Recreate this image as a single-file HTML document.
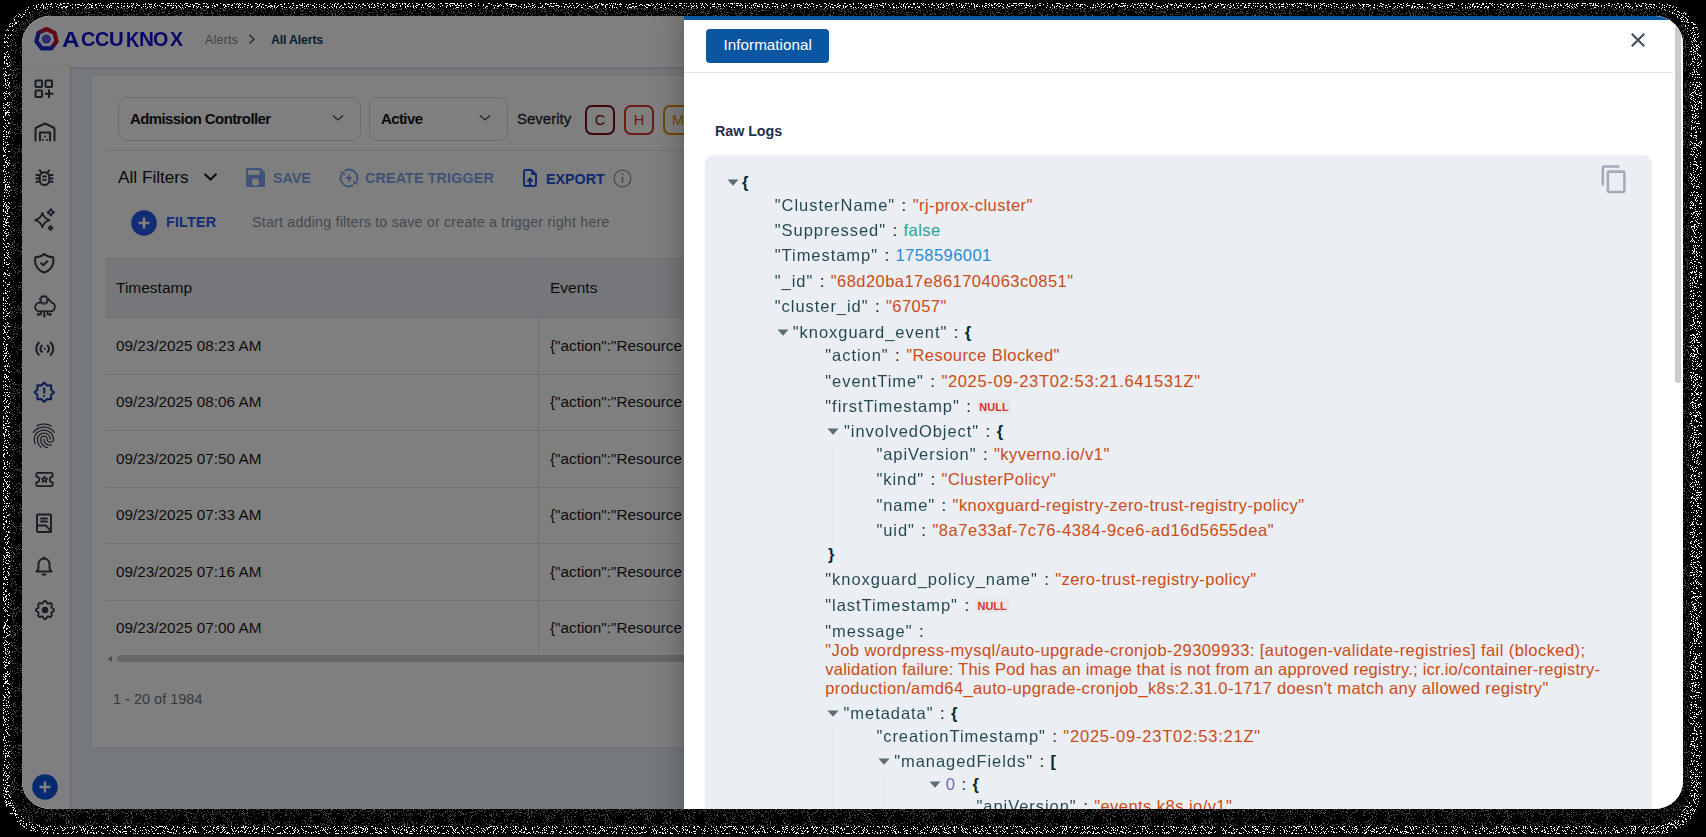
<!DOCTYPE html>
<html><head><meta charset="utf-8">
<style>
*{box-sizing:border-box;margin:0;padding:0}
html,body{width:1706px;height:837px;overflow:hidden;background:#000;font-family:"Liberation Sans",sans-serif}
#frame{position:absolute;left:22px;top:16px;width:1661px;height:793px;border-radius:28px;overflow:hidden;background:#fff}
#pg{position:absolute;left:-22px;top:-16px;width:1706px;height:837px}
.a{position:absolute;white-space:nowrap;line-height:1}
.k{color:#002b36;opacity:.85;letter-spacing:0.95px}.c{display:inline-block;width:17.5px;text-align:center;color:#0b2030}.v{color:#cb4b16;letter-spacing:0.45px}.b{color:#002b36;font-weight:700}.msg{color:#cb4b16;letter-spacing:0.43px}.nl{display:inline-block;vertical-align:1px;font-size:11px;font-weight:700;color:#dc322f;background:#e7e7e9;border-radius:3px;padding:1px 2px;line-height:12px}
#overlay{position:absolute;left:0;top:0;width:1706px;height:837px;background:rgba(0,0,0,0.5)}
</style></head><body>
<svg class="a" style="left:0;top:0" width="1706" height="837">
<defs>
<filter id="nz" x="0" y="0" width="1706" height="837" filterUnits="userSpaceOnUse" color-interpolation-filters="sRGB">
<feTurbulence type="fractalNoise" baseFrequency="0.9" numOctaves="2" seed="7" result="t"/>
<feColorMatrix in="t" type="matrix" values="0 0 0 0 1  0 0 0 0 1  0 0 0 0 1  3 0 0 0 -1.3"/>
<feComponentTransfer><feFuncA type="discrete" tableValues="0 1"/></feComponentTransfer>
</filter>
<filter id="nz2" x="0" y="0" width="1706" height="837" filterUnits="userSpaceOnUse" color-interpolation-filters="sRGB">
<feTurbulence type="fractalNoise" baseFrequency="0.95" numOctaves="2" seed="11" result="t"/>
<feColorMatrix in="t" type="matrix" values="0 0 0 0 0.3  0 0 0 0 0.3  0 0 0 0 0.3  3 0 0 0 -1.4"/>
<feComponentTransfer><feFuncA type="discrete" tableValues="0 1"/></feComponentTransfer>
</filter>
<mask id="m1"><rect x="3" y="3" width="1699" height="831" rx="44" fill="#fff"/><rect x="10" y="8.5" width="1680" height="817.5" rx="37" fill="#000"/></mask>
<mask id="m2"><rect x="10" y="8.5" width="1680" height="817.5" rx="37" fill="#fff"/></mask>
</defs>
<rect x="0" y="0" width="1706" height="837" fill="#fff" filter="url(#nz)" mask="url(#m1)"/>
<rect x="0" y="0" width="1706" height="837" fill="#fff" filter="url(#nz2)" mask="url(#m2)"/>
</svg>
<div id="frame"><div id="pg">

  <!-- main bg -->
  <div class="a" style="left:70px;top:66px;width:1640px;height:771px;background:#ebf0fa"></div>
  <!-- card -->
  <div class="a" style="left:92px;top:76px;width:1600px;height:671px;background:#fff;box-shadow:0 1px 4px rgba(0,0,0,0.08)"></div>
  <!-- header -->
  <div class="a" style="left:0;top:0;width:1706px;height:67px;background:#fff;box-shadow:0 1px 3px rgba(0,0,0,0.12)"></div>
  <!-- logo -->
  <svg class="a" style="left:33px;top:26px" width="27" height="26" viewBox="0 0 27 26">
    <defs><linearGradient id="lg" x1="1" y1="0" x2="0" y2="1"><stop offset="0.35" stop-color="#c0102a"/><stop offset="0.65" stop-color="#1a2ad0"/></linearGradient></defs>
    <polygon points="13.5,3 21.5,6.8 23.6,15.4 18.2,22.4 8.8,22.4 3.4,15.4 5.5,6.8" fill="none" stroke="url(#lg)" stroke-width="4.2" stroke-linejoin="round"/>
    <circle cx="13.4" cy="13" r="4.6" fill="#5050d8"/>
    <path d="M13.4 10.4 l2.2 1.2 v2.6 l-2.2 1.2 l-2.2 -1.2 v-2.6z M13.4 12.8 v2.6 M11.2 11.6 l2.2 1.2 l2.2 -1.2" fill="none" stroke="#8080f0" stroke-width="0.6"/>
  </svg>
  <div class="a" style="left:62.2px;top:28.8px;font-size:22px;font-weight:700;color:#0c0cd0;transform:scaleX(1.107);transform-origin:0 0">A</div><div class="a" style="left:81.2px;top:30.3px;font-size:19.3px;font-weight:700;color:#0c0cd0;transform:scaleX(1.025);transform-origin:0 0">C</div><div class="a" style="left:95.3px;top:30.3px;font-size:19.3px;font-weight:700;color:#0c0cd0;transform:scaleX(1.025);transform-origin:0 0">C</div><div class="a" style="left:108.9px;top:30.3px;font-size:19.3px;font-weight:700;color:#0c0cd0;transform:scaleX(1.058);transform-origin:0 0">U</div><div class="a" style="left:125.8px;top:28.8px;font-size:22px;font-weight:700;color:#0c0cd0;transform:scaleX(0.847);transform-origin:0 0">K</div><div class="a" style="left:138.9px;top:30.3px;font-size:19.3px;font-weight:700;color:#0c0cd0;transform:scaleX(1.075);transform-origin:0 0">N</div><div class="a" style="left:153.4px;top:30.3px;font-size:19.3px;font-weight:700;color:#0c0cd0;transform:scaleX(1.021);transform-origin:0 0">O</div><div class="a" style="left:169.6px;top:30.3px;font-size:19.3px;font-weight:700;color:#0c0cd0;transform:scaleX(1.017);transform-origin:0 0">X</div>
  <div class="a" style="left:205px;top:34px;font-size:12.3px;color:#7d8797;letter-spacing:0.3px">Alerts</div>
  <svg class="a" style="left:248px;top:34px" width="8" height="11"><path d="M1.5 1 L6 5.3 L1.5 9.6" fill="none" stroke="#555" stroke-width="1.4"/></svg>
  <div class="a" style="left:271px;top:34px;font-size:12.3px;font-weight:700;color:#0b3d6e;letter-spacing:-0.15px">All Alerts</div>
  <!-- sidebar -->
  <div class="a" style="left:0;top:67px;width:70px;height:770px;background:#fff;box-shadow:1px 0 3px rgba(0,0,0,0.1)"></div>
  <!-- filters row1 -->
  <div class="a" style="left:118px;top:97px;width:243px;height:44px;border:1px solid #d4d9e1;border-radius:9px"></div>
  <div class="a" style="left:130px;top:111px;font-size:15px;font-weight:700;color:#141414;letter-spacing:-0.6px">Admission Controller</div>
  <svg class="a" style="left:332px;top:114px" width="12" height="8"><path d="M1 1.5 L6 6 L11 1.5" fill="none" stroke="#444" stroke-width="1.3"/></svg>
  <div class="a" style="left:369px;top:97px;width:139px;height:44px;border:1px solid #d4d9e1;border-radius:9px"></div>
  <div class="a" style="left:381px;top:111px;font-size:15px;font-weight:700;color:#141414;letter-spacing:-0.6px">Active</div>
  <svg class="a" style="left:479px;top:114px" width="12" height="8"><path d="M1 1.5 L6 6 L11 1.5" fill="none" stroke="#444" stroke-width="1.3"/></svg>
  <div class="a" style="left:517px;top:111px;font-size:15px;color:#1e2a3a;letter-spacing:0px;-webkit-text-stroke:0.3px #1e2a3a">Severity</div>
  <div class="a" style="left:585px;top:105px;width:30px;height:30px;border:2px solid #7a0c0c;border-radius:7px;color:#7a0c0c;font-size:14.5px;text-align:center;line-height:27.5px">C</div>
  <div class="a" style="left:624px;top:105px;width:30px;height:30px;border:2px solid #d9342b;border-radius:7px;color:#d9342b;font-size:14.5px;text-align:center;line-height:27.5px">H</div>
  <div class="a" style="left:663px;top:105px;width:30px;height:30px;border:2px solid #e58a10;border-radius:7px;color:#e58a10;font-size:14.5px;text-align:center;line-height:27.5px">M</div>
  <div class="a" style="left:105px;top:150px;width:600px;height:1px;background:#e2e5ea"></div>
  <!-- filters row2 -->
  <div class="a" style="left:118px;top:169px;font-size:17.2px;color:#141414">All Filters</div>
  <svg class="a" style="left:203px;top:172px" width="15" height="10"><path d="M1.5 1.8 L7.5 7.5 L13.5 1.8" fill="none" stroke="#141414" stroke-width="2"/></svg>
  <svg class="a" style="left:246.3px;top:167.8px" width="19" height="19.6" viewBox="0 0 19 19.6"><path d="M1.8 0 h13 l4.2 4.2 v13.6 a1.8 1.8 0 0 1 -1.8 1.8 h-15.4 a1.8 1.8 0 0 1 -1.8 -1.8 v-16 a1.8 1.8 0 0 1 1.8 -1.8z" fill="#7fa6ec"/><rect x="2" y="2.2" width="11.5" height="4.6" fill="#fff"/><circle cx="9.5" cy="14.2" r="3.6" fill="#fff"/></svg>
  <div class="a" style="left:273px;top:171px;font-size:14.3px;font-weight:700;color:#7fa6ec">SAVE</div>
  <svg class="a" style="left:337.3px;top:166px" width="24" height="24" viewBox="0 0 24 24"><path d="M7.85 4.81 A8.3 8.3 0 0 1 19.52 15.51 M16.15 19.19 A8.3 8.3 0 0 1 4.48 8.49" fill="none" stroke="#7fa6ec" stroke-width="2"/><path d="M2.2 5.8 h5.5 v4.2z M21.8 18.2 h-5.5 v-4.2z" fill="#7fa6ec"/><path d="M13 6.8 L8.6 13 H11.6 L10.9 17.4 L15.4 11 H12.4z" fill="#7fa6ec"/></svg>
  <div class="a" style="left:365px;top:171px;font-size:14.3px;font-weight:700;color:#7fa6ec;letter-spacing:0.15px">CREATE TRIGGER</div>
  <svg class="a" style="left:523px;top:169px" width="14" height="18" viewBox="0 0 14 18"><path d="M2.5 1 H8.5 L13 5.5 V15.5 a1.5 1.5 0 0 1 -1.5 1.5 H2.5 a1.5 1.5 0 0 1 -1.5 -1.5 V2.5 a1.5 1.5 0 0 1 1.5 -1.5z" fill="none" stroke="#1d52e0" stroke-width="1.9" stroke-linejoin="round"/><path d="M8.3 1 V6 H13z" fill="#1d52e0"/><path d="M7 16.5 V9.8 M4.3 12.4 L7 9.6 L9.7 12.4" fill="none" stroke="#1d52e0" stroke-width="2"/></svg>
  <div class="a" style="left:546px;top:172px;font-size:14.3px;font-weight:700;color:#1d52e0">EXPORT</div>
  <svg class="a" style="left:613px;top:169px" width="19" height="19" viewBox="0 0 19 19"><circle cx="9.5" cy="9.5" r="8.4" fill="none" stroke="#8a8f96" stroke-width="1.2"/><path d="M9.5 8 v6" stroke="#8a8f96" stroke-width="1.5"/><circle cx="9.5" cy="5.3" r="0.95" fill="#8a8f96"/></svg>
  <!-- filters row3 -->
  <svg class="a" style="left:131px;top:210px" width="26" height="26" viewBox="0 0 26 26"><circle cx="13" cy="13" r="12.8" fill="#2458ee"/><path d="M13 7.5 v11 M7.5 13 h11" stroke="#fff" stroke-width="2.6"/></svg>
  <div class="a" style="left:166px;top:215px;font-size:14.3px;font-weight:700;color:#2458ee;letter-spacing:0.2px">FILTER</div>
  <div class="a" style="left:252px;top:215px;font-size:14.3px;color:#8b95a3;letter-spacing:0.19px">Start adding filters to save or create a trigger right here</div>
  <!-- table -->
  <div class="a" style="left:105px;top:258px;width:600px;height:60px;background:#eaeef5;border-top:1px solid #dfe4ec;border-bottom:1px solid #dfe4ec"></div>
  <div class="a" style="left:538px;top:258px;width:1px;height:395px;background:#dbe3ef"></div>
  <div class="a" style="left:116px;top:279.5px;font-size:15.5px;color:#1a1a1a">Timestamp</div>
  <div class="a" style="left:550px;top:279.5px;font-size:15.5px;color:#1a1a1a">Events</div>
  <div class="a" style="left:105px;top:374.0px;width:600px;height:1px;background:#dbe3ef"></div>
  <div class="a" style="left:116px;top:337.9px;font-size:15.3px;color:#1a1a1a">09/23/2025 08:23 AM</div>
  <div class="a" style="left:550px;top:337.9px;font-size:15.3px;color:#1a1a1a">{"action":"Resource</div>
  <div class="a" style="left:105px;top:430.4px;width:600px;height:1px;background:#dbe3ef"></div>
  <div class="a" style="left:116px;top:394.3px;font-size:15.3px;color:#1a1a1a">09/23/2025 08:06 AM</div>
  <div class="a" style="left:550px;top:394.3px;font-size:15.3px;color:#1a1a1a">{"action":"Resource</div>
  <div class="a" style="left:105px;top:486.8px;width:600px;height:1px;background:#dbe3ef"></div>
  <div class="a" style="left:116px;top:450.7px;font-size:15.3px;color:#1a1a1a">09/23/2025 07:50 AM</div>
  <div class="a" style="left:550px;top:450.7px;font-size:15.3px;color:#1a1a1a">{"action":"Resource</div>
  <div class="a" style="left:105px;top:543.2px;width:600px;height:1px;background:#dbe3ef"></div>
  <div class="a" style="left:116px;top:507.1px;font-size:15.3px;color:#1a1a1a">09/23/2025 07:33 AM</div>
  <div class="a" style="left:550px;top:507.1px;font-size:15.3px;color:#1a1a1a">{"action":"Resource</div>
  <div class="a" style="left:105px;top:599.6px;width:600px;height:1px;background:#dbe3ef"></div>
  <div class="a" style="left:116px;top:563.5px;font-size:15.3px;color:#1a1a1a">09/23/2025 07:16 AM</div>
  <div class="a" style="left:550px;top:563.5px;font-size:15.3px;color:#1a1a1a">{"action":"Resource</div>
  <div class="a" style="left:116px;top:619.9px;font-size:15.3px;color:#1a1a1a">09/23/2025 07:00 AM</div>
  <div class="a" style="left:550px;top:619.9px;font-size:15.3px;color:#1a1a1a">{"action":"Resource</div>

  <div class="a" style="left:105px;top:655px;width:600px;height:8px;background:#fff"></div>
  <svg class="a" style="left:106px;top:655px" width="8" height="8"><path d="M6 1 L1.5 4 L6 7z" fill="#999"/></svg>
  <div class="a" style="left:117px;top:655px;width:580px;height:7px;border-radius:4px;background:#cdd0d4"></div>
  <div class="a" style="left:113px;top:692px;font-size:14.5px;color:#6d7480">1 - 20 of 1984</div>
  <!-- sidebar icons -->
  <svg class="a" style="left:32.0px;top:77.0px" width="24" height="24" viewBox="0 0 24 24" fill="none" stroke="#333d49" stroke-width="2" stroke-linecap="round" stroke-linejoin="round"><rect x="3.5" y="3.5" width="6.5" height="6.5" rx="0.8"/><rect x="13.5" y="3.5" width="6.5" height="6.5" rx="0.8"/><rect x="3.5" y="13.5" width="6.5" height="6.5" rx="0.8"/><path d="M13.5 16.8h7M17 13.3v7"/></svg>
  <svg class="a" style="left:32.5px;top:120.4px" width="24" height="24" viewBox="0 0 24 24" fill="none" stroke="#333d49" stroke-width="2" stroke-linecap="round" stroke-linejoin="round"><path d="M2.5 20.5v-11.5q0-1 1-1.5l8.5-4l8.5 4q1 .5 1 1.5v11.5"/><path d="M7 20.5v-8h10v8"/><path d="M12 16.5v.01M10 20v.01M14 20v.01"/></svg>
  <svg class="a" style="left:32.5px;top:164.5px" width="23" height="23" viewBox="0 0 24 24" fill="none" stroke="#333d49" stroke-width="2" stroke-linecap="round" stroke-linejoin="round"><path d="M9 8.5v-1M15 8.5v-1M8.5 7.5l-1.5-2M15.5 7.5l1.5-2"/><path d="M12 7.5a5 5 0 0 1 5 5v3.5a5 5 0 0 1 -10 0v-3.5a5 5 0 0 1 5 -5z"/><path d="M10.5 12h3M10.5 15.5h3M3.5 10.5h3.5M3.5 14h3.5M3.5 17.5h3.5M17 10.5h3.5M17 14h3.5M17 17.5h3.5"/></svg>
  <svg class="a" style="left:30px;top:204px" width="28" height="30" viewBox="0 0 28 30" fill="none" stroke="#333d49" stroke-width="1.8" stroke-linejoin="round"><path d="M12.40 8.90 Q13.98 14.52 19.60 16.10 Q13.98 17.68 12.40 23.30 Q10.82 17.68 5.20 16.10 Q10.82 14.52 12.40 8.90z M20.80 5.20 Q21.76 7.44 24.00 8.40 Q21.76 9.36 20.80 11.60 Q19.84 9.36 17.60 8.40 Q19.84 7.44 20.80 5.20z M20.60 21.90 Q21.34 23.27 22.70 24.00 Q21.34 24.73 20.60 26.10 Q19.87 24.73 18.50 24.00 Q19.87 23.27 20.60 21.90z"/></svg>
  <svg class="a" style="left:32.0px;top:250.8px" width="24.5" height="24.5" viewBox="0 0 24 24" fill="none" stroke="#333d49" stroke-width="2" stroke-linecap="round" stroke-linejoin="round"><path d="M9 12l2 2l4 -4"/><path d="M12 3a12 12 0 0 0 8.5 3a12 12 0 0 1 -8.5 15a12 12 0 0 1 -8.5 -15a12 12 0 0 0 8.5 -3"/></svg>
  <svg class="a" style="left:30px;top:290px" width="28" height="32" viewBox="0 0 28 32" fill="none" stroke="#333d49" stroke-width="1.7" stroke-linecap="round" stroke-linejoin="round"><path d="M8.5 21.4 H20.5 A4.6 4.6 0 0 0 21.2 12.3 A5.6 5.6 0 0 0 10.6 12.8 A4.3 4.3 0 0 0 8.5 21.4z"/><circle cx="14" cy="9.8" r="4.3" fill="#fff" stroke="none"/><circle cx="14" cy="9.8" r="3.3" stroke-width="1.5"/><circle cx="14" cy="9.8" r="4.5" stroke-width="1.3" stroke-dasharray="1.5 1.33" stroke-linecap="butt"/><path d="M14.3 21.4 V25 M11 21.4 V24.5 H9 M17.6 21.4 V24.5 H19.6"/><circle cx="8.3" cy="24.5" r="1.4" fill="#333d49" stroke="none"/><circle cx="20.3" cy="24.5" r="1.4" fill="#333d49" stroke="none"/><circle cx="14.3" cy="26" r="1.4" fill="#333d49" stroke="none"/></svg>
  <svg class="a" style="left:31.5px;top:336.4px" width="25.5" height="25.5" viewBox="0 0 24 24" fill="none" stroke="#333d49" stroke-width="2" stroke-linecap="round" stroke-linejoin="round"><path d="M12 12v.01"/><path d="M14.828 9.172a4 4 0 0 1 0 5.656"/><path d="M17.657 6.343a8 8 0 0 1 0 11.314"/><path d="M9.168 14.828a4 4 0 0 1 0 -5.656"/><path d="M6.337 17.657a8 8 0 0 1 0 -11.314"/></svg>
  <svg class="a" style="left:31.8px;top:380.2px" width="24.5" height="24.5" viewBox="0 0 24 24" fill="none" stroke="#1b3db0" stroke-width="2" stroke-linecap="round" stroke-linejoin="round"><path d="M12.00 2.50 L14.76 5.35 L18.72 5.28 L18.65 9.24 L21.50 12.00 L18.65 14.76 L18.72 18.72 L14.76 18.65 L12.00 21.50 L9.24 18.65 L5.28 18.72 L5.35 14.76 L2.50 12.00 L5.35 9.24 L5.28 5.28 L9.24 5.35z"/><path d="M12 8v4.5M12 15.8v.01"/></svg>
  <svg class="a" style="left:29.1px;top:421.3px" width="29.8" height="29.8" viewBox="0 0 24 24"><path fill="#333d49" d="M17.81 4.47c-.08 0-.16-.02-.23-.06C15.66 3.42 14 3 12.01 3c-1.98 0-3.86.47-5.57 1.41-.24.13-.54.04-.68-.2-.13-.24-.04-.55.2-.68C7.82 2.52 9.86 2 12.01 2c2.13 0 3.98.47 6.01 1.52.25.13.34.43.21.67-.09.18-.26.28-.42.28zM3.5 9.72c-.1 0-.2-.03-.29-.09-.23-.16-.28-.47-.12-.7.99-1.4 2.25-2.5 3.75-3.27C9.98 4.04 14 4.03 17.15 5.65c1.5.77 2.76 1.86 3.75 3.25.16.22.11.54-.12.7-.23.16-.54.11-.7-.12-.9-1.26-2.04-2.25-3.39-2.94-2.87-1.47-6.54-1.47-9.4.01-1.36.7-2.5 1.7-3.4 2.96-.08.14-.23.21-.39.21zm6.25 12.07c-.13 0-.26-.05-.35-.15-.87-.87-1.34-1.43-2.01-2.64-.69-1.23-1.05-2.73-1.05-4.34 0-2.97 2.54-5.39 5.66-5.39s5.66 2.42 5.66 5.39c0 .28-.22.5-.5.5s-.5-.22-.5-.5c0-2.42-2.09-4.39-4.66-4.39-2.57 0-4.66 1.97-4.66 4.39 0 1.44.32 2.77.93 3.85.64 1.15 1.08 1.64 1.85 2.42.19.2.19.51 0 .71-.11.1-.24.15-.37.15zm7.17-1.85c-1.19 0-2.24-.3-3.1-.89-1.49-1.01-2.38-2.65-2.38-4.39 0-.28.22-.5.5-.5s.5.22.5.5c0 1.41.72 2.74 1.94 3.56.71.48 1.54.71 2.54.71.24 0 .64-.03 1.04-.1.27-.05.53.13.58.41.05.27-.13.53-.41.58-.57.11-1.07.12-1.21.12zM14.91 22c-.04 0-.09-.01-.13-.02-1.59-.44-2.63-1.03-3.72-2.1-1.4-1.39-2.17-3.24-2.17-5.22 0-1.62 1.38-2.94 3.08-2.94 1.7 0 3.08 1.32 3.08 2.94 0 1.07.93 1.94 2.08 1.94s2.08-.87 2.08-1.94c0-3.77-3.25-6.83-7.25-6.83-2.84 0-5.44 1.58-6.61 4.03-.39.81-.59 1.76-.59 2.8 0 .78.07 2.01.67 3.61.1.26-.03.55-.29.64-.26.1-.55-.04-.64-.29-.49-1.31-.73-2.61-.73-3.96 0-1.2.23-2.29.68-3.24 1.33-2.79 4.28-4.6 7.51-4.6 4.55 0 8.25 3.51 8.25 7.83 0 1.62-1.38 2.94-3.08 2.94s-3.08-1.32-3.08-2.94c0-1.07-.93-1.94-2.08-1.94s-2.08.87-2.08 1.94c0 1.71.66 3.31 1.87 4.51.95.94 1.86 1.46 3.27 1.85.27.07.42.35.35.61-.05.23-.26.38-.47.38z"/></svg>
  <svg class="a" style="left:32.5px;top:468.2px" width="23" height="23" viewBox="0 0 24 24" fill="none" stroke="#333d49" stroke-width="1.9" stroke-linecap="round" stroke-linejoin="round"><path d="M3.5 6.5a1.5 1.5 0 0 1 1.5 -1.5h14a1.5 1.5 0 0 1 1.5 1.5v2.5a3 3 0 0 0 0 6v2.5a1.5 1.5 0 0 1 -1.5 1.5h-14a1.5 1.5 0 0 1 -1.5 -1.5v-2.5a3 3 0 0 0 0 -6z"/><path d="M12 9l1 2h2l-1.5 1.5l.6 2.2l-2.1 -1.2l-2.1 1.2l.6 -2.2l-1.5 -1.5h2z" stroke-width="1.6"/></svg>
  <svg class="a" style="left:32.0px;top:511.0px" width="24" height="24" viewBox="0 0 24 24" fill="none" stroke="#333d49" stroke-width="1.9" stroke-linecap="round" stroke-linejoin="round"><path d="M5 4.5a1 1 0 0 1 1 -1h12a1 1 0 0 1 1 1v15.5a1 1 0 0 1 -1 1h-12a1 1 0 0 1 -1 -1z"/><path d="M9 7.5h6M9 10.5h6M5 14.5h9l5 6"/></svg>
  <svg class="a" style="left:32.2px;top:554.0px" width="24" height="24" viewBox="0 0 24 24" fill="none" stroke="#333d49" stroke-width="1.9" stroke-linecap="round" stroke-linejoin="round"><path d="M12 3.5v1"/><path d="M12 4.5a5.5 5.5 0 0 1 5.5 5.5v4.5l2 3h-15l2 -3v-4.5a5.5 5.5 0 0 1 5.5 -5.5z"/><path d="M10.5 20.5h3"/></svg>
  <svg class="a" style="left:32.5px;top:597.7px" width="24" height="24" viewBox="0 0 24 24" fill="none" stroke="#333d49" stroke-width="1.9" stroke-linecap="round" stroke-linejoin="round"><path d="M10.325 4.317c.426 -1.756 2.924 -1.756 3.35 0a1.724 1.724 0 0 0 2.573 1.066c1.543 -.94 3.31 .826 2.37 2.37a1.724 1.724 0 0 0 1.065 2.572c1.756 .426 1.756 2.924 0 3.35a1.724 1.724 0 0 0 -1.066 2.573c.94 1.543 -.826 3.31 -2.37 2.37a1.724 1.724 0 0 0 -2.572 1.065c-.426 1.756 -2.924 1.756 -3.35 0a1.724 1.724 0 0 0 -2.573 -1.066c-1.543 .94 -3.31 -.826 -2.37 -2.37a1.724 1.724 0 0 0 -1.065 -2.572c-1.756 -.426 -1.756 -2.924 0 -3.35a1.724 1.724 0 0 0 1.066 -2.573c-.94 -1.543 .826 -3.31 2.37 -2.37c1 .608 2.296 .07 2.572 -1.065z"/><circle cx="12" cy="12" r="2.3" fill="#333d49"/></svg>
  <svg class="a" style="left:31.5px;top:774px" width="26" height="26" viewBox="0 0 26 26"><circle cx="13" cy="13" r="12.8" fill="#0a55e0"/><path d="M13 7.5v11M7.5 13h11" stroke="#fff" stroke-width="2.4"/></svg>
  <div id="overlay"></div>
  <!-- drawer -->
  <div class="a" id="drawer" style="left:684px;top:0;width:1022px;height:837px;background:#fff;box-shadow:0px 8px 10px -5px rgba(0,0,0,0.2),0px 16px 24px 2px rgba(0,0,0,0.14),0px 6px 30px 5px rgba(0,0,0,0.12)"></div>
  <div class="a" style="left:684px;top:16px;width:1000px;height:4px;background:#0b5aa6"></div>
  <div class="a" style="left:706px;top:28.5px;width:123px;height:34.5px;border-radius:4px;background:#0a56a0"></div>
  <div class="a" style="left:723.5px;top:37.2px;font-size:15.2px;color:#fff;letter-spacing:0.05px">Informational</div>
  <svg class="a" style="left:1630px;top:32px" width="16" height="16" viewBox="0 0 16 16"><path d="M1.8 1.8 L14.2 14.2 M14.2 1.8 L1.8 14.2" stroke="#3c4a5e" stroke-width="2"/></svg>
  <div class="a" style="left:684px;top:72px;width:989px;height:1px;background:#e3e3e3"></div>
  <div class="a" style="left:1675px;top:26px;width:6px;height:357px;border-radius:3px;background:#cbcbcb"></div>
  <div class="a" style="left:715px;top:124px;font-size:14.3px;font-weight:700;color:#1f2e4d;letter-spacing:-0.05px">Raw Logs</div>
  <div class="a" style="left:705px;top:155px;width:947px;height:700px;border-radius:9px;background:#ebeef2;box-shadow:0 0 2px rgba(0,0,0,0.07)"></div>
  <svg class="a" style="left:1598.8px;top:163.7px" width="30.5" height="30.5" viewBox="0 0 24 24"><path fill="#a3abb9" d="M16 1H4c-1.1 0-2 .9-2 2v14h2V3h12V1zm3 4H8c-1.1 0-2 .9-2 2v14c0 1.1.9 2 2 2h11c1.1 0 2-.9 2-2V7c0-1.1-.9-2-2-2zm0 16H8V7h11v14z"/></svg>
  <div class="a" style="left:730px;top:192px;width:1px;height:620px;background:#e3e6ea"></div>
  <div class="a" style="left:781px;top:345px;width:1px;height:470px;background:#e3e6ea"></div>
  <div class="a" style="left:832px;top:443px;width:1px;height:103px;background:#e3e6ea"></div>
  <div class="a" style="left:832px;top:725px;width:1px;height:90px;background:#e3e6ea"></div>
  <div class="a" style="left:882.5px;top:773px;width:1px;height:40px;background:#e3e6ea"></div>
  <div class="a" style="left:933px;top:796px;width:1px;height:20px;background:#e3e6ea"></div>
<svg class="a" style="left:726.5px;top:178.5px" width="12" height="7"><path d="M0.5 0.5 H11.5 L6 6.8z" fill="#5b6d76"/></svg><div class="a" style="left:742px;top:174px;font-size:16.5px"><span class="b">{</span></div>
<div class="a" style="left:774.8px;top:196.8px;font-size:16.5px"><span class="k">"ClusterName"</span><span class="c">:</span><span class="v">"rj-prox-cluster"</span></div>
<div class="a" style="left:774.8px;top:222.0px;font-size:16.5px"><span class="k">"Suppressed"</span><span class="c">:</span><span class="v" style="color:#2aa198">false</span></div>
<div class="a" style="left:774.8px;top:247.3px;font-size:16.5px"><span class="k">"Timestamp"</span><span class="c">:</span><span class="v" style="color:#268bd2">1758596001</span></div>
<div class="a" style="left:774.8px;top:272.6px;font-size:16.5px"><span class="k">"_id"</span><span class="c">:</span><span class="v">"68d20ba17e861704063c0851"</span></div>
<div class="a" style="left:774.8px;top:298.2px;font-size:16.5px"><span class="k">"cluster_id"</span><span class="c">:</span><span class="v">"67057"</span></div>
<svg class="a" style="left:777.3px;top:329.1px" width="12" height="7"><path d="M0.5 0.5 H11.5 L6 6.8z" fill="#5b6d76"/></svg><div class="a" style="left:792.8px;top:324.1px;font-size:16.5px"><span class="k">"knoxguard_event"</span><span class="c">:</span><span class="b">{</span></div>
<div class="a" style="left:825.3px;top:346.6px;font-size:16.5px"><span class="k">"action"</span><span class="c">:</span><span class="v">"Resource Blocked"</span></div>
<div class="a" style="left:825.3px;top:372.5px;font-size:16.5px"><span class="k">"eventTime"</span><span class="c">:</span><span class="v" style="letter-spacing:0.66px">"2025-09-23T02:53:21.641531Z"</span></div>
<div class="a" style="left:825.3px;top:397.7px;font-size:16.5px"><span class="k">"firstTimestamp"</span><span class="c">:</span><span class="nl">NULL</span></div>
<svg class="a" style="left:827.3px;top:428.2px" width="12" height="7"><path d="M0.5 0.5 H11.5 L6 6.8z" fill="#5b6d76"/></svg><div class="a" style="left:844.0px;top:423.2px;font-size:16.5px"><span class="k">"involvedObject"</span><span class="c">:</span><span class="b">{</span></div>
<div class="a" style="left:876.4px;top:446.2px;font-size:16.5px"><span class="k">"apiVersion"</span><span class="c">:</span><span class="v">"kyverno.io/v1"</span></div>
<div class="a" style="left:876.4px;top:471.4px;font-size:16.5px"><span class="k">"kind"</span><span class="c">:</span><span class="v">"ClusterPolicy"</span></div>
<div class="a" style="left:876.4px;top:496.9px;font-size:16.5px"><span class="k">"name"</span><span class="c">:</span><span class="v">"knoxguard-registry-zero-trust-registry-policy"</span></div>
<div class="a" style="left:876.4px;top:521.8px;font-size:16.5px"><span class="k">"uid"</span><span class="c">:</span><span class="v" style="letter-spacing:0.55px">"8a7e33af-7c76-4384-9ce6-ad16d5655dea"</span></div>
<div class="a" style="left:828px;top:545.5px;font-size:16.5px"><span class="b">}</span></div>
<div class="a" style="left:825.3px;top:571.2px;font-size:16.5px"><span class="k">"knoxguard_policy_name"</span><span class="c">:</span><span class="v">"zero-trust-registry-policy"</span></div>
<div class="a" style="left:825.3px;top:597.0px;font-size:16.5px"><span class="k">"lastTimestamp"</span><span class="c">:</span><span class="nl">NULL</span></div>
<div class="a" style="left:825.3px;top:622.8px;font-size:16.5px"><span class="k">"message"</span><span class="c">:</span></div>
<div class="a msg" style="left:825.3px;top:642.0px;font-size:16.5px;letter-spacing:0.43px">"Job wordpress-mysql/auto-upgrade-cronjob-29309933: [autogen-validate-registries] fail (blocked);</div>
<div class="a msg" style="left:825.3px;top:660.9px;font-size:16.5px;letter-spacing:0.235px">validation failure: This Pod has an image that is not from an approved registry.; icr.io/container-registry-</div>
<div class="a msg" style="left:825.3px;top:679.9px;font-size:16.5px;letter-spacing:0.38px">production/amd64_auto-upgrade-cronjob_k8s:2.31.0-1717 doesn't match any allowed registry"</div>
<svg class="a" style="left:827.3px;top:710.0px" width="12" height="7"><path d="M0.5 0.5 H11.5 L6 6.8z" fill="#5b6d76"/></svg><div class="a" style="left:843.5px;top:705.0px;font-size:16.5px"><span class="k">"metadata"</span><span class="c">:</span><span class="b">{</span></div>
<div class="a" style="left:876.4px;top:727.8px;font-size:16.5px"><span class="k">"creationTimestamp"</span><span class="c">:</span><span class="v" style="letter-spacing:0.78px">"2025-09-23T02:53:21Z"</span></div>
<svg class="a" style="left:878.0px;top:758.3px" width="12" height="7"><path d="M0.5 0.5 H11.5 L6 6.8z" fill="#5b6d76"/></svg><div class="a" style="left:894.2px;top:753.3px;font-size:16.5px"><span class="k">"managedFields"</span><span class="c">:</span><span class="b">[</span></div>
<svg class="a" style="left:928.7px;top:781.0px" width="12" height="7"><path d="M0.5 0.5 H11.5 L6 6.8z" fill="#5b6d76"/></svg><div class="a" style="left:945.8px;top:776.0px;font-size:16.5px"><span style="color:#6c71c4">0</span><span class="c">:</span><span class="b">{</span></div>
<div class="a" style="left:976.5px;top:798.0px;font-size:16.5px"><span class="k">"apiVersion"</span><span class="c">:</span><span class="v">"events.k8s.io/v1"</span></div>
</div>
</body></html>
